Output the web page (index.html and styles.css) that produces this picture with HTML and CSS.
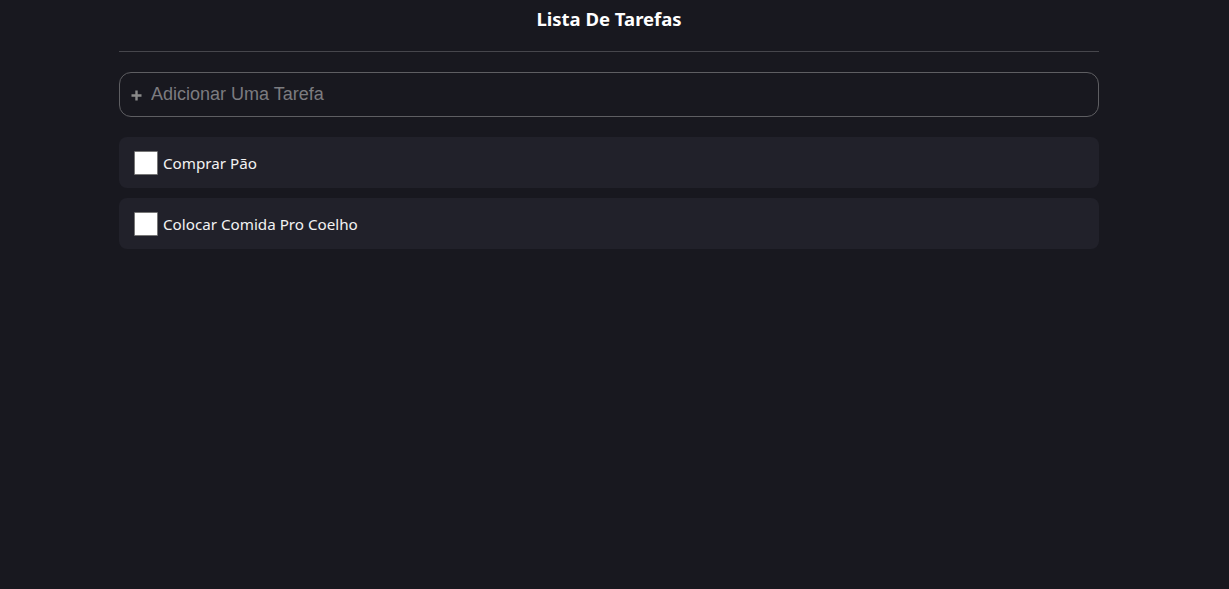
FILE: index.html
```html
<!DOCTYPE html>
<html lang="pt">
<head>
<meta charset="utf-8">
<title>Lista De Tarefas</title>
<link rel="stylesheet" href="styles.css">
</head>
<body>
<main class="app">
  <h1 class="title">Lista De Tarefas</h1>
  <hr class="divider">
  <label class="add">
    <span class="add-icon"><svg width="11" height="11" viewBox="0 0 11 11"><path d="M5.5 0.5v10M0.5 5.5h10" stroke="#8a8a8a" stroke-width="2.4"/></svg></span>
    <input class="add-input" type="text" placeholder="Adicionar Uma Tarefa">
  </label>
  <ul class="tasks">
    <li class="task"><span class="check"></span><span class="task-text">Comprar Pão</span></li>
    <li class="task"><span class="check"></span><span class="task-text">Colocar Comida Pro Coelho</span></li>
  </ul>
</main>
</body>
</html>
```
FILE: styles.css
```css
html, body {
  margin: 0;
  padding: 0;
  background: #18181f;
  height: 100%;
}
body {
  padding-right: 11px;
  font-family: "Noto Sans", "Open Sans", sans-serif;
  color: #ffffff;
}
.app {
  width: 980px;
  margin: 0 auto;
}
.title {
  margin: 0;
  padding-top: 6px;
  height: 35px;
  text-align: center;
  font-size: 18.5px;
  font-weight: 700;
  line-height: 26px;
}
.divider {
  margin: 10px 0 20px;
  border: 0;
  border-top: 1px solid #46464c;
  height: 0;
}
.add {
  display: flex;
  align-items: center;
  height: 45px;
  box-sizing: border-box;
  border: 1px solid #5e5e62;
  border-radius: 12px;
  padding: 0 11px;
  gap: 9px;
}
.add-icon {
  display: flex;
  align-items: center;
  margin-top: 2px;
}
.add-input {
  flex: 1;
  background: transparent;
  border: 0;
  outline: none;
  color: #ddd;
  font-family: "Liberation Sans", Arial, sans-serif;
  font-size: 18px;
  padding: 0;
}
.add-input::placeholder {
  color: #7c7c80;
}
.tasks {
  list-style: none;
  margin: 20px 0 0;
  padding: 0;
  display: flex;
  flex-direction: column;
  gap: 10px;
}
.task {
  display: flex;
  align-items: center;
  height: 51px;
  background: #21212a;
  border-radius: 8px;
  padding: 0 15px;
  gap: 5px;
}
.check {
  width: 22px;
  height: 22px;
  background: #fff;
  border: 1px solid #767676;
  border-radius: 1px;
}
.task-text {
  font-size: 15.2px;
  color: #f2f2f2;
}
```
